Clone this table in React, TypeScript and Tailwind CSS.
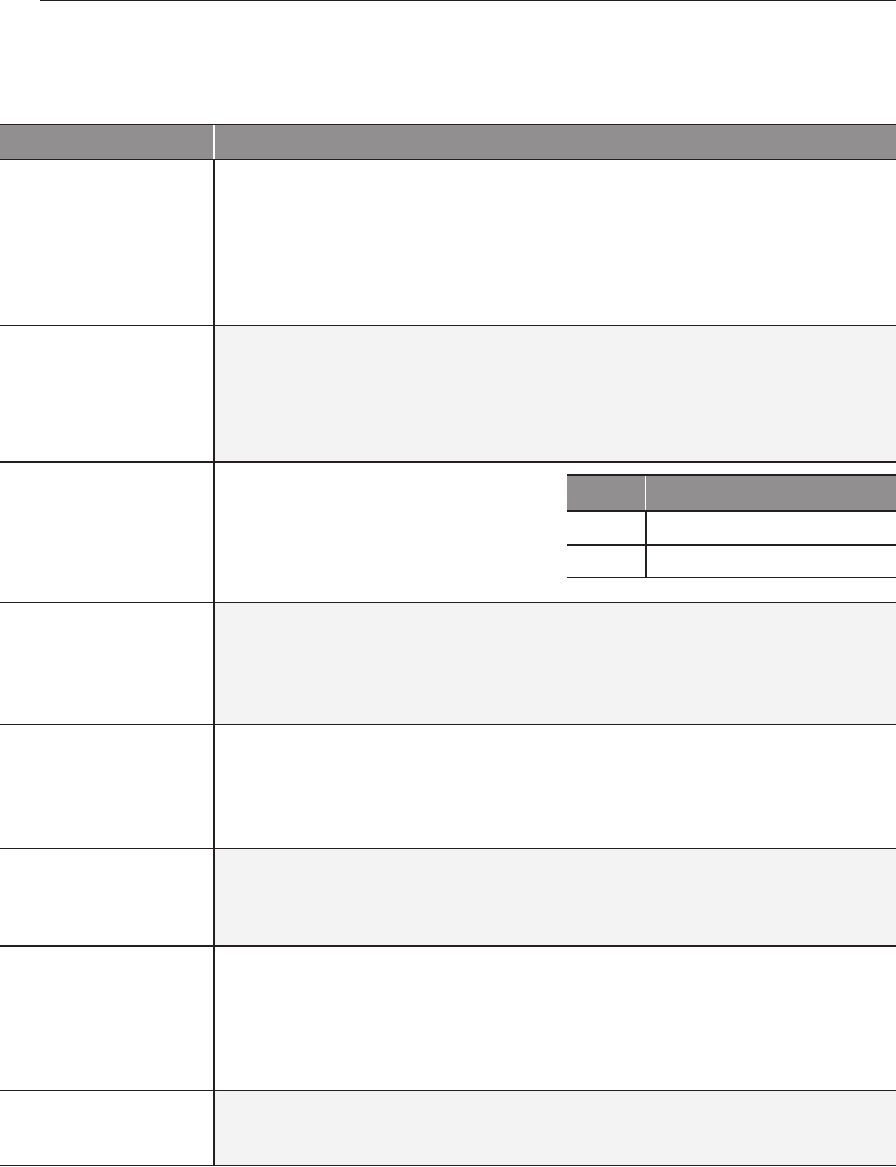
import React from 'react';

type Row = { height: string; border: string; shaded: boolean; nested?: boolean };

const rows: Row[] = [
  { height: 'h-[166px]', border: 'border-t', shaded: false },
  { height: 'h-[136px]', border: 'border-t', shaded: true },
  { height: 'h-[141px]', border: 'border-t-2', shaded: false, nested: true },
  { height: 'h-[122px]', border: 'border-t', shaded: true },
  { height: 'h-[124px]', border: 'border-t', shaded: false },
  { height: 'h-[97px]', border: 'border-t', shaded: true },
  { height: 'h-[145px]', border: 'border-t-2', shaded: false },
  { height: 'h-[75px]', border: 'border-t', shaded: true },
];

const NestedTable: React.FC = () => (
  <div className="ml-[352px] mt-[11px] flex flex-col">
    <div className="flex h-[36px] border-t-2 border-[#231f20] bg-[#918f90]">
      <div className="w-[78px]" />
      <div className="w-px bg-white" />
      <div className="flex-1" />
    </div>
    <div className="flex h-[34px] border-t-2 border-[#231f20]">
      <div className="w-[78px]" />
      <div className="w-[2px] bg-[#231f20]" />
      <div className="flex-1" />
    </div>
    <div className="flex h-[34px] border-t-2 border-b border-[#231f20]">
      <div className="w-[78px]" />
      <div className="w-[2px] bg-[#231f20]" />
      <div className="flex-1" />
    </div>
  </div>
);

const App: React.FC = () => {
  return (
    <div className="w-[896px] h-[1167px] bg-white font-['Liberation_Sans',sans-serif]">
      <div className="ml-[40px] h-px bg-[#231f20]" />
      <div className="h-[123px]" />

      {/* header */}
      <div className="flex h-[35px] border-t border-[#231f20] bg-[#918f90]">
        <div className="w-[213px]" />
        <div className="w-[2px] bg-white" />
        <div className="flex-1" />
      </div>

      {rows.map((row, i) => (
        <div key={i} className={`flex ${row.height} ${row.border} border-[#231f20]`}>
          <div className="w-[213px]" />
          <div className="w-[2px] bg-[#231f20]" />
          <div className={`flex-1 ${row.shaded ? 'bg-[#f3f3f3]' : 'bg-white'}`}>
            {row.nested && <NestedTable />}
          </div>
        </div>
      ))}
      <div className="h-px bg-[#231f20]" />
    </div>
  );
};

export default App;
